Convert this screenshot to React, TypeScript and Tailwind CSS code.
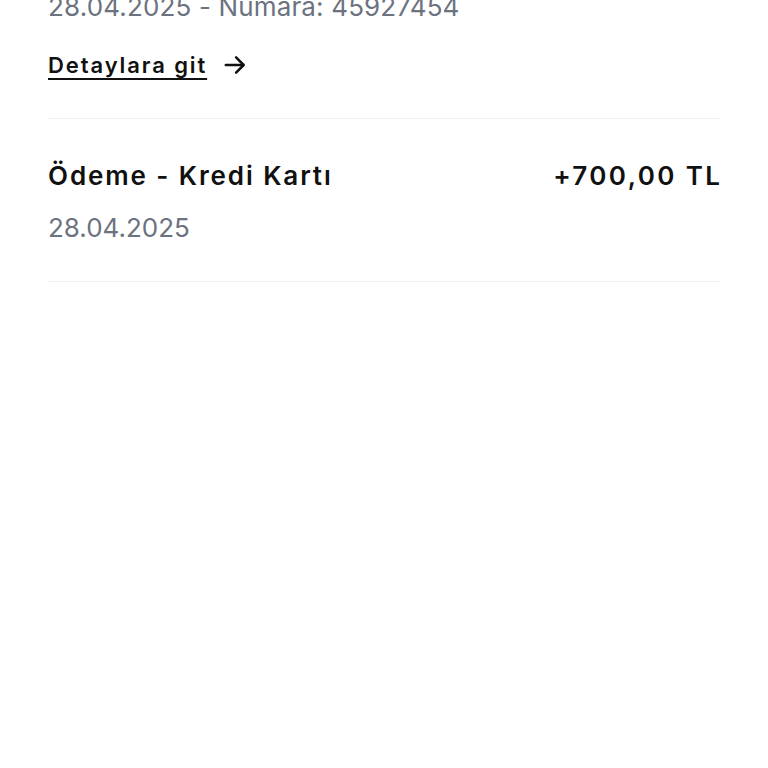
import React from 'react';

const ArrowRight: React.FC = () => (
  <svg width="26" height="26" viewBox="0 0 24 24" fill="none" stroke="currentColor" strokeWidth="2.3" strokeLinecap="round" strokeLinejoin="round">
    <path d="M3.5 12h16" />
    <path d="M13 5l7 7-7 7" />
  </svg>
);

export default function App() {
  return (
    <div className="min-h-[768px] w-full bg-white overflow-hidden font-['Inter',sans-serif] text-[#111111]">
      <div className="px-12">
        {/* previous transaction, scrolled partly off screen */}
        <div className="border-b border-[#f0f0f0] pb-[39px] -mt-[9px]">
          <p className="text-[26px] leading-[32px] tracking-[0.15px] text-[#6b7280]">28.04.2025 - Numara: 45927454</p>
          <a className="mt-[28px] flex items-center gap-[15px] text-[22px] leading-[28px] font-semibold tracking-[1.9px]">
            <span className="underline decoration-2 underline-offset-[5px]">Detaylara git</span>
            <ArrowRight />
          </a>
        </div>

        {/* payment row */}
        <div className="border-b border-[#f0f0f0] pt-[41px] pb-[37px]">
          <div className="flex items-center justify-between text-[26px] leading-[32px] font-semibold">
            <span className="tracking-[1.9px]">Ödeme - Kredi Kartı</span>
            <span className="tracking-[2.4px] -mr-[2.4px]">+700,00 TL</span>
          </div>
          <p className="mt-[20px] text-[26px] leading-[32px] text-[#6b7280]">28.04.2025</p>
        </div>
      </div>
    </div>
  );
}
